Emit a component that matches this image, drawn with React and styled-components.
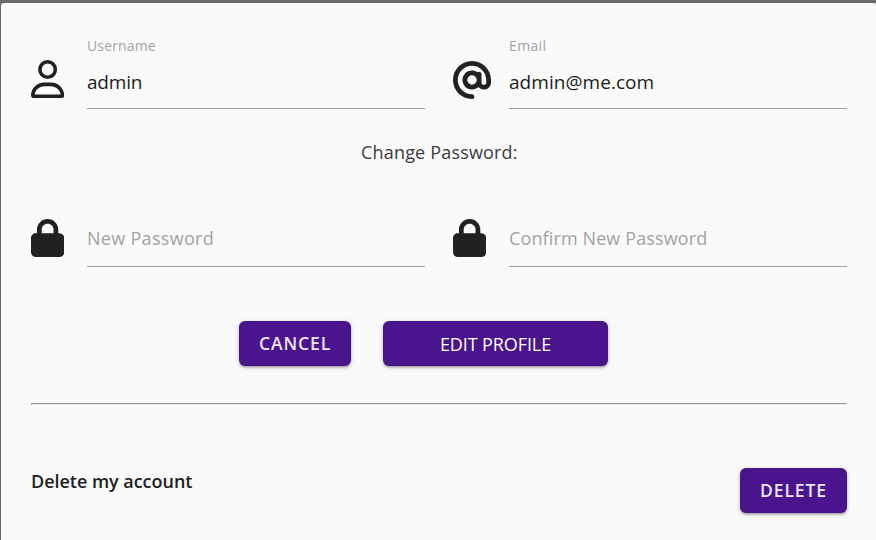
import React from "react";
import styled, { createGlobalStyle } from "styled-components";
import { FaRegUser, FaAt, FaLock } from "react-icons/fa6";

const GlobalStyle = createGlobalStyle`
  *, *::before, *::after { box-sizing: border-box; }
  body { margin: 0; background: #6c6b6c; overflow: hidden; }
`;

const Backdrop = styled.div`
  height: 100vh;
  padding: 3px 0 0 1px;
  overflow: hidden;
  background: #6c6b6c;
  font-family: "Open Sans", "Noto Sans", sans-serif;
  color: #212121;
`;

const Modal = styled.main`
  height: 600px;
  padding: 35px 29px 0 30px;
  border-radius: 3px 2px 0 0;
  background: #fafafa;
`;

const FieldRow = styled.div`
  display: grid;
  grid-template-columns: 394px 394px;
  column-gap: 28px;
  height: 71px;
`;

const Field = styled.div`
  display: grid;
  grid-template-columns: 56px 1fr;
`;

const IconCell = styled.div`
  padding-top: ${({ $top }) => $top}px;
  svg {
    display: block;
    width: ${({ $width = 33.25 }) => $width}px;
    height: 38px;
  }
`;

const InputArea = styled.div`
  display: flex;
  flex-direction: column;
  height: 71px;
  border-bottom: 1px solid #9e9e9e;
`;

const Text = styled.span`
  display: block;
  white-space: nowrap;
  line-height: ${({ $line }) => $line}px;
  font-size: ${({ $size }) => $size}px;
  letter-spacing: ${({ $track = 0 }) => $track}px;
`;

const Label = styled(Text)`
  height: 16px;
  color: #a3a3a3;
`;

const Value = styled(Text)`
  margin-top: 13px;
  color: #1c1c1c;
`;

const Placeholder = styled(Text)`
  margin-top: 30px;
  color: #a3a3a3;
`;

const SectionTitle = styled(Text)`
  margin: 31px 0 32px 330px;
  color: #3c3c3c;
`;

const Actions = styled.div`
  display: flex;
  gap: 32px;
  margin: 54px 0 37px 208px;
`;

const Button = styled.button`
  display: flex;
  justify-content: center;
  width: ${({ $width }) => $width}px;
  height: 45px;
  padding: ${({ $top = 0 }) => $top}px 0 0;
  border: 0;
  border-radius: 6px;
  background: #4a148c;
  color: #fff;
  font-family: inherit;
  font-weight: ${({ $weight = 400 }) => $weight};
  box-shadow: 0 2px 2px 0 rgba(0,0,0,.14), 0 3px 1px -2px rgba(0,0,0,.12), 0 1px 5px 0 rgba(0,0,0,.2);
`;

const ButtonText = styled(Text)`
  color: ${({ $soft }) => ($soft ? "#ece6f3" : "#fff")};
`;

const Divider = styled.hr`
  height: 2px;
  margin: 0;
  border: 1px solid;
  border-color: #949494 #ededed #ededed #949494;
`;

const DeleteRow = styled.div`
  display: flex;
  justify-content: space-between;
  margin-top: 63px;
`;

const DeleteText = styled(Text)`
  font-weight: 600;
`;

export default function App() {
  return (
    <>
      <GlobalStyle />
      <Backdrop>
        <Modal>
          <FieldRow>
            <Field>
              <IconCell $top={22}><FaRegUser /></IconCell>
              <InputArea>
                <Label $line={16} $size={14} $track={0.15}>Username</Label>
                <Value $line={30} $size={19} $track={-0.2}>admin</Value>
              </InputArea>
            </Field>
            <Field>
              <IconCell $top={22.6} $width={38}><FaAt /></IconCell>
              <InputArea>
                <Label $line={16} $size={14} $track={0.35}>Email</Label>
                <Value $line={30} $size={19} $track={0.05}>admin@me.com</Value>
              </InputArea>
            </Field>
          </FieldRow>
          <SectionTitle $line={24} $size={18} $track={0.18}>Change Password:</SectionTitle>
          <FieldRow>
            <Field>
              <IconCell $top={23}><FaLock /></IconCell>
              <InputArea>
                <Placeholder $line={24} $size={18} $track={0.3}>New Password</Placeholder>
              </InputArea>
            </Field>
            <Field>
              <IconCell $top={23}><FaLock /></IconCell>
              <InputArea>
                <Placeholder $line={24} $size={18} $track={0.12}>Confirm New Password</Placeholder>
              </InputArea>
            </Field>
          </FieldRow>
          <Actions>
            <Button $width={112} $weight={600}><ButtonText $soft $line={45} $size={17.5} $track={0.9}>CANCEL</ButtonText></Button>
            <Button $width={225} $top={1}><ButtonText $line={45} $size={18} $track={-0.1}>EDIT PROFILE</ButtonText></Button>
          </Actions>
          <Divider />
          <DeleteRow>
            <DeleteText $line={27} $size={18} $track={-0.03}>Delete my account</DeleteText>
            <Button $width={107} $weight={600}><ButtonText $soft $line={45} $size={17.5} $track={0.9}>DELETE</ButtonText></Button>
          </DeleteRow>
        </Modal>
      </Backdrop>
    </>
  );
}
